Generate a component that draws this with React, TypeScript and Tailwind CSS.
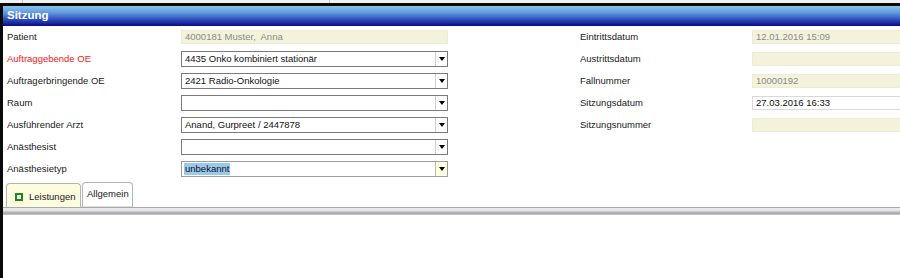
import React from "react";

const font = { fontFamily: '"Liberation Sans", Arial, sans-serif' };

function Arrow() {
  return (
    <div className="w-0 h-0 border-l-[3px] border-r-[3px] border-t-[4px] border-l-transparent border-r-transparent border-t-black" />
  );
}

function Dropdown({ value, highlight, focus }: { value?: string; highlight?: boolean; focus?: boolean }) {
  return (
    <div
      className={`flex h-[16px] w-[267px] border ${focus ? "border-[#9c9c9c]" : "border-[#7a7a7a]"} bg-white`}
    >
      <div className="flex flex-1 items-center px-[3px] text-[9.5px] leading-none text-[#111] whitespace-pre">
        {value ? (
          <span className={highlight ? "bg-[#99c9ef] px-[1px] -ml-[1px] leading-[12px]" : ""}>{value}</span>
        ) : null}
      </div>
      <div
        className={`flex w-[12px] items-center justify-center border-l ${
          focus ? "border-[#b8b8b8] bg-[#ffffe0]" : "border-[#cfcfcf] bg-white"
        }`}
      >
        <Arrow />
      </div>
    </div>
  );
}

function ReadOnly({ value, wide }: { value?: string; wide?: boolean }) {
  return (
    <div
      className={`flex h-[14px] ${wide ? "w-[200px]" : "w-[267px]"} items-center whitespace-pre border border-[#ececd8] bg-[#f3f3dc] px-[3px] text-[9.5px] leading-none text-[#8a8a8a]`}
    >
      {value}
    </div>
  );
}

function Label({ children, red }: { children: React.ReactNode; red?: boolean }) {
  return (
    <div className={`flex items-center text-[9.5px] leading-none ${red ? "text-[#f01818]" : "text-[#1a1a1a]"}`}>
      {children}
    </div>
  );
}

export default function App() {
  const left: { label: string; red?: boolean; field: React.ReactNode }[] = [
    { label: "Patient", field: <ReadOnly value="4000181 Muster,  Anna" /> },
    { label: "Auftraggebende OE", red: true, field: <Dropdown value="4435 Onko kombiniert stationär" /> },
    { label: "Auftragerbringende OE", field: <Dropdown value="2421 Radio-Onkologie" /> },
    { label: "Raum", field: <Dropdown /> },
    { label: "Ausführender Arzt", field: <Dropdown value="Anand, Gurpreet / 2447878" /> },
    { label: "Anästhesist", field: <Dropdown /> },
    { label: "Anästhesietyp", field: <Dropdown value="unbekannt" highlight focus /> },
  ];
  const right: { label: string; field: React.ReactNode }[] = [
    { label: "Eintrittsdatum", field: <ReadOnly wide value="12.01.2016 15:09" /> },
    { label: "Austrittsdatum", field: <ReadOnly wide /> },
    { label: "Fallnummer", field: <ReadOnly wide value="10000192" /> },
    {
      label: "Sitzungsdatum",
      field: (
        <div className="flex h-[14px] w-[200px] items-center border border-[#d8d8d8] bg-white px-[3px] text-[9.5px] leading-none text-[#111]">
          27.03.2016 16:33
        </div>
      ),
    },
    { label: "Sitzungsnummer", field: <ReadOnly wide /> },
    { label: "", field: null },
    { label: "", field: null },
  ];

  return (
    <div className="h-[278px] w-[900px] overflow-hidden bg-white" style={font}>
      {/* top strip */}
      <div className="flex h-[3px] bg-[#f2f2f2]">
        <div className="w-[23px] border-r border-[#c8c8c8]" />
        <div className="w-[307px] border-r border-[#c8c8c8]" />
      </div>
      <div className="h-[3px] bg-[#0a0a0a]" />
      <div className="flex h-[272px] border-l-[3px] border-[#0a0a0a]">
        <div className="flex flex-1 flex-col">
          {/* title bar */}
          <div className="flex h-[20px] items-center bg-[linear-gradient(to_bottom,#8cc4ec_0%,#5f98dc_35%,#2a48b8_70%,#0a0a86_100%)] pl-[4px] text-[11.5px] font-bold leading-none text-white">
            Sitzung
          </div>
          {/* form */}
          <div className="flex">
            <div className="grid w-[577px] grid-cols-[174px_267px] grid-rows-[repeat(7,22px)] pl-[4px]">
              {left.map((r) => (
                <React.Fragment key={r.label}>
                  <Label red={r.red}>{r.label}</Label>
                  <div className="flex items-center">{r.field}</div>
                </React.Fragment>
              ))}
            </div>
            <div className="grid flex-1 grid-cols-[172px_1fr] grid-rows-[repeat(7,22px)]">
              {right.map((r, i) => (
                <React.Fragment key={i}>
                  <Label>{r.label}</Label>
                  <div className="flex items-center">{r.field}</div>
                </React.Fragment>
              ))}
            </div>
          </div>
          {/* tabs */}
          <div className="mt-[2px] flex h-[25px] items-end pl-[3px]">
            <div className="flex h-[24px] w-[75px] items-center gap-[6px] rounded-t-[4px] border border-b-0 border-[#b4b4b4] bg-[#fdfcde] pl-[8px] pt-[2px] text-[9.5px] leading-none text-[#1a1a1a]">
              <div className="h-[8px] w-[8px] border-2 border-[#1e8a1e] bg-[#f4fff0]" />
              <span>Leistungen</span>
            </div>
            <div className="ml-[1px] flex h-[25px] w-[51px] items-center rounded-t-[4px] border border-b-0 border-[#b4b4b4] bg-white pb-[2px] pl-[4px] text-[9.5px] leading-none text-[#1a1a1a] shadow-[0_-1px_0_#e0e0e0_inset]">
              Allgemein
            </div>
          </div>
          {/* separator */}
          <div className="h-[8px] bg-[linear-gradient(to_bottom,#a9a9ad_0%,#a9a9ad_12%,#ececee_13%,#e4e4e6_45%,#bdbdc3_60%,#a4a4aa_85%,#d8d8d8_100%)]" />
          <div className="flex-1 bg-white" />
        </div>
      </div>
    </div>
  );
}
